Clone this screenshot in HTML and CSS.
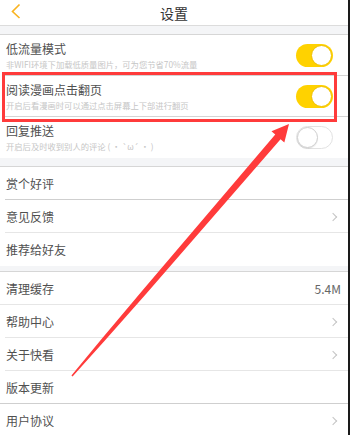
FILE: index.html
```html
<!DOCTYPE html>
<html lang="zh">
<head>
<meta charset="utf-8">
<link rel="stylesheet" href="styles.css">
</head>
<body>
<div class="page">
  <header class="topbar">
    <svg class="back" width="24" height="25" viewBox="0 0 24 25"><polyline points="19.5,4.5 12.5,11.5 19.5,18" fill="none" stroke="#f9b320" stroke-width="1.6"/></svg>
    <div class="title">设置</div>
  </header>
  <div class="band"></div>
  <section class="group">
    <div class="row sw">
      <div class="texts">
        <div class="label">低流量模式</div>
        <div class="sub">非WIFI环境下加载低质量图片，可为您节省70%流量</div>
      </div>
      <div class="toggle on"><span class="knob"></span></div>
    </div>
    <div class="row sw">
      <div class="texts">
        <div class="label">阅读漫画点击翻页</div>
        <div class="sub">开启后看漫画时可以通过点击屏幕上下部进行翻页</div>
      </div>
      <div class="toggle on"><span class="knob"></span></div>
    </div>
    <div class="row sw last">
      <div class="texts">
        <div class="label">回复推送</div>
        <div class="sub">开启后及时收到别人的评论 ( · `ω´ · )</div>
      </div>
      <div class="toggle off"><span class="knob"></span></div>
    </div>
  </section>
  <div class="band"></div>
  <section class="group">
    <div class="row item strong"><span class="label">赏个好评</span></div>
    <div class="row item"><span class="label">意见反馈</span><span class="chev"></span></div>
    <div class="row item last"><span class="label">推荐给好友</span></div>
  </section>
  <div class="band small"></div>
  <section class="group">
    <div class="row item full"><span class="label">清理缓存</span><span class="value">5.4M</span></div>
    <div class="row item"><span class="label">帮助中心</span><span class="chev"></span></div>
    <div class="row item"><span class="label">关于快看</span><span class="chev"></span></div>
    <div class="row item full strong"><span class="label">版本更新</span></div>
    <div class="row item last"><span class="label">用户协议</span><span class="chev"></span></div>
  </section>
  <svg class="annot" width="350" height="435" viewBox="0 0 350 435">
    <rect x="3.5" y="73.5" width="332" height="47" fill="none" stroke="#ff3b3b" stroke-width="3"/>
    <polygon fill="#ff3b3b" points="71.43,375.51 101.57,338.96 142.2,290.67 275.25,134.62 271.46,131.36 289,124 284.34,142.44 280.55,139.18 146.0,293.93 104.23,341.24 72.57,376.49"/>
  </svg>
</div>
</body>
</html>
```

FILE: styles.css
```css
html, body {
  margin: 0;
  padding: 0;
  background: #fff;
}
body {
  font-family: "Noto Sans CJK SC", "Noto Sans", sans-serif;
}
.page {
  position: relative;
  width: 348px;
  height: 435px;
  overflow: hidden;
  border-right: 2px solid #1a1a1a;
  background: #fff;
}
.topbar {
  height: 25px;
  border-bottom: 1px solid #dcdcdc;
  display: flex;
  align-items: center;
  justify-content: center;
  position: relative;
}
.back {
  position: absolute;
  left: 0;
  top: 0;
}
.title {
  font-size: 14px;
  color: #333;
  line-height: 24px;
}
.band {
  height: 8px;
  background: #f4f5f7;
  border-bottom: 1px solid #d6d6d6;
}
.band.small {
  height: 5px;
}
.group {
  background: #fff;
}
.row {
  display: flex;
  align-items: center;
  padding-left: 6px;
  box-sizing: border-box;
  position: relative;
}
.row::after {
  content: "";
  position: absolute;
  left: 5px;
  right: 0;
  bottom: 0;
  height: 1px;
  background: #e6e6e6;
}
.row.strong::after {
  background: #cfcfcf;
}
.row.full::after {
  left: 0;
}
.row.last::after {
  display: none;
}
.row.sw {
  height: 41px;
  padding-right: 15px;
  padding-bottom: 1px;
}
.row.sw::after {
  background: #d4d4d4;
}
.texts {
  flex: 1;
  display: flex;
  flex-direction: column;
}
.label {
  font-size: 12px;
  line-height: 16px;
  color: #505050;
}
.sub {
  font-size: 8.3px;
  line-height: 12px;
  color: #c6c6c6;
  margin-top: 1px;
  white-space: nowrap;
}
.toggle {
  width: 37px;
  height: 23px;
  border-radius: 12px;
  box-sizing: border-box;
  position: relative;
  flex: none;
}
.toggle.on {
  background: #ffd200;
}
.toggle.off {
  background: #fff;
  border: 1px solid #e2e2e2;
}
.knob {
  position: absolute;
  top: 1px;
  width: 21px;
  height: 21px;
  border-radius: 50%;
  background: #fff;
  box-sizing: border-box;
}
.toggle.on .knob {
  right: 1px;
  border: 1px solid #f0c000;
}
.toggle.off .knob {
  left: 0;
  top: 0;
  border: 1px solid #cfcfcf;
  box-shadow: 0 1px 1px rgba(0,0,0,0.08);
}
.row.item {
  height: 33px;
  padding-right: 11px;
  justify-content: space-between;
}
.chev {
  width: 5px;
  height: 5px;
  border-top: 1px solid #c4c4c4;
  border-right: 1px solid #c4c4c4;
  transform: rotate(45deg);
  margin-right: 1px;
}
.value {
  font-size: 12px;
  color: #666;
  margin-right: -4px;
}
.annot {
  position: absolute;
  left: 0;
  top: 0;
  pointer-events: none;
}
```
